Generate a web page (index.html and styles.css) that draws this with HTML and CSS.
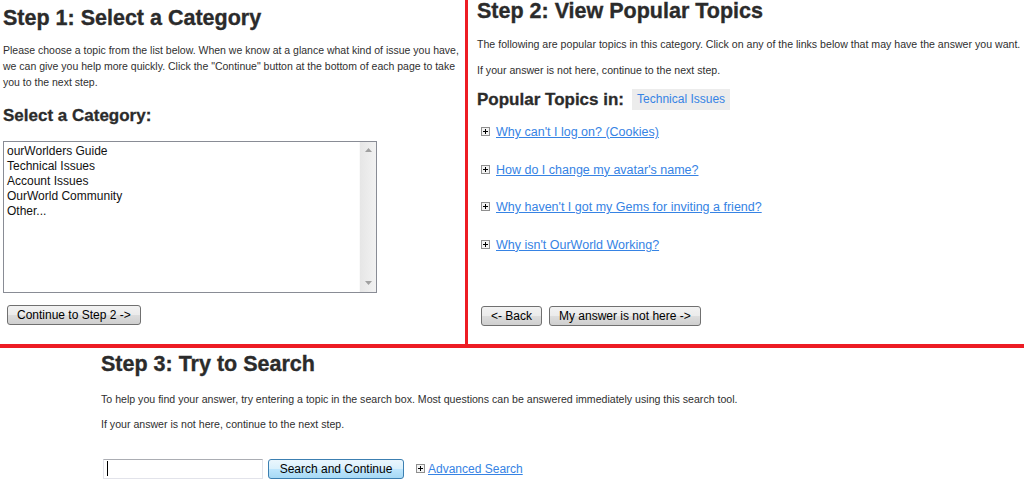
FILE: index.html
```html
<!DOCTYPE html>
<html lang="en">
<head>
    <meta charset="UTF-8">
    <meta name="viewport" content="width=device-width, initial-scale=1.0">
    <title>OurWorld Support - Ask a Question</title>
    <link rel="stylesheet" href="styles.css">
</head>
<body>
    <div class="steps-top">
        <div class="step step-one">
            <h1>Step 1: Select a Category</h1>
            <p class="intro">Please choose a topic from the list below. When we know at a glance what kind of issue you have, we can give you help more quickly. Click the "Continue" button at the bottom of each page to take you to the next step.</p>
            <h2>Select a Category:</h2>
            <div class="listbox">
                <ul class="listbox-items">
                    <li>ourWorlders Guide</li>
                    <li>Technical Issues</li>
                    <li>Account Issues</li>
                    <li>OurWorld Community</li>
                    <li>Other...</li>
                </ul>
                <div class="listbox-scroll">
                    <svg width="7" height="4" viewBox="0 0 7 4"><polygon points="3.5,0 7,4 0,4" fill="#a0a0a0"/></svg>
                    <svg width="7" height="4" viewBox="0 0 7 4"><polygon points="0,0 7,0 3.5,4" fill="#a0a0a0"/></svg>
                </div>
            </div>
            <div class="actions">
                <button class="btn">Continue to Step 2 -&gt;</button>
            </div>
        </div>

        <div class="step step-two">
            <h1>Step 2: View Popular Topics</h1>
            <p class="intro nowrap">The following are popular topics in this category. Click on any of the links below that may have the answer you want.</p>
            <p class="intro next">If your answer is not here, continue to the next step.</p>
            <div class="topics-head">
                <h2>Popular Topics in:</h2>
                <span class="category-tag">Technical Issues</span>
            </div>
            <ul class="topics">
                <li>
                    <svg class="expander" width="9" height="9" viewBox="0 0 9 9"><rect x="0.5" y="0.5" width="8" height="8" fill="#f3f3f3" stroke="#8f8f8f"/><path d="M2 4.5H7M4.5 2V7" stroke="#000"/></svg>
                    <a href="#">Why can't I log on? (Cookies)</a>
                </li>
                <li>
                    <svg class="expander" width="9" height="9" viewBox="0 0 9 9"><rect x="0.5" y="0.5" width="8" height="8" fill="#f3f3f3" stroke="#8f8f8f"/><path d="M2 4.5H7M4.5 2V7" stroke="#000"/></svg>
                    <a href="#">How do I change my avatar's name?</a>
                </li>
                <li>
                    <svg class="expander" width="9" height="9" viewBox="0 0 9 9"><rect x="0.5" y="0.5" width="8" height="8" fill="#f3f3f3" stroke="#8f8f8f"/><path d="M2 4.5H7M4.5 2V7" stroke="#000"/></svg>
                    <a href="#">Why haven't I got my Gems for inviting a friend?</a>
                </li>
                <li>
                    <svg class="expander" width="9" height="9" viewBox="0 0 9 9"><rect x="0.5" y="0.5" width="8" height="8" fill="#f3f3f3" stroke="#8f8f8f"/><path d="M2 4.5H7M4.5 2V7" stroke="#000"/></svg>
                    <a href="#">Why isn't OurWorld Working?</a>
                </li>
            </ul>
            <div class="actions">
                <button class="btn">&lt;- Back</button>
                <button class="btn">My answer is not here -&gt;</button>
            </div>
        </div>
    </div>

    <div class="step step-three">
        <h1>Step 3: Try to Search</h1>
        <p class="intro">To help you find your answer, try entering a topic in the search box. Most questions can be answered immediately using this search tool.</p>
        <p class="intro next">If your answer is not here, continue to the next step.</p>
        <div class="search-row">
            <input type="text" class="search-box">
            <button class="btn btn-search">Search and Continue</button>
            <span class="advanced">
                <svg class="expander" width="9" height="9" viewBox="0 0 9 9"><rect x="0.5" y="0.5" width="8" height="8" fill="#f3f3f3" stroke="#8f8f8f"/><path d="M2 4.5H7M4.5 2V7" stroke="#000"/></svg>
                <a href="#">Advanced Search</a>
            </span>
        </div>
    </div>
</body>
</html>
```

FILE: styles.css
```css
body {
    font-family: "Liberation Sans", Arial, sans-serif;
    background-color: #fff;
    color: #333;
    margin: 0;
    padding: 0;
}
a {
    color: #3683e4;
}
h1 {
    font-size: 21.5px;
    line-height: 24px;
    font-weight: bold;
    color: #2b2b2b;
    -webkit-text-stroke: 0.35px #2b2b2b;
    margin: 6px 0 0;
}
h2 {
    font-size: 17px;
    line-height: 20px;
    font-weight: bold;
    color: #2b2b2b;
    -webkit-text-stroke: 0.3px #2b2b2b;
    margin: 16px 0 0;
}
.intro {
    font-size: 10.6px;
    line-height: 16px;
    color: #2f2f2f;
    margin: 12px 0 0;
}
.intro.next {
    margin-top: 10px;
}
.nowrap {
    white-space: nowrap;
}

/* top row: step 1 and step 2 side by side */
.steps-top {
    display: grid;
    grid-template-columns: 465px 1fr;
    height: 344px;
    border-bottom: 4px solid #ed1c24;
}
.step-one {
    padding-left: 3px;
}
.step-one .intro {
    font-size: 10.5px;
    width: 462px;
}
.step-two {
    border-left: 3px solid #ed1c24;
    padding-left: 9px;
}
.step-two h1 {
    margin-top: 0;
    line-height: 22px;
}
.step-two .intro {
    margin-top: 14px;
}
.step-two .intro.next {
    margin-top: 10px;
}

/* category list box */
.listbox {
    display: flex;
    width: 374px;
    height: 152px;
    box-sizing: border-box;
    margin-top: 15px;
    border: 1px solid #898c95;
    background: #fff;
}
.listbox-items {
    flex: 1;
    list-style: none;
    margin: 0;
    padding: 2px 0 0 3px;
    font-size: 12px;
    line-height: 15px;
    color: #111;
}
.listbox-scroll {
    width: 17px;
    display: flex;
    flex-direction: column;
    justify-content: space-between;
    align-items: center;
    padding: 6px 0 7px;
    box-sizing: border-box;
    background: linear-gradient(to right, #e6e6e6, #f2f2f2);
    border-left: 1px solid #fafafa;
}

/* buttons */
.actions {
    display: flex;
    gap: 7px;
    margin: 12px 0 0 4px;
}
.btn {
    font-family: "Liberation Sans", Arial, sans-serif;
    font-size: 12px;
    color: #000;
    height: 20px;
    padding: 0 9px;
    border: 1px solid #707070;
    border-radius: 3px;
    background: linear-gradient(#f2f2f2 0%, #ebebeb 50%, #dddddd 50%, #cfcfcf 100%);
    cursor: pointer;
}
.step-two .actions {
    margin-top: 52px;
}

/* popular topics */
.topics-head {
    display: flex;
    align-items: center;
    gap: 8px;
    height: 21px;
    margin-top: 11px;
}
.topics-head h2 {
    margin: 0;
}
.category-tag {
    font-size: 12px;
    line-height: 21px;
    padding: 0 5px;
    background-color: #ececec;
    color: #3683e4;
}
.topics {
    list-style: none;
    margin: 14px 0 0;
    padding: 0;
    display: flex;
    flex-direction: column;
    gap: 20.5px;
}
.topics li {
    display: flex;
    align-items: flex-start;
    font-size: 12.5px;
    line-height: 17px;
}
.expander {
    flex-shrink: 0;
    margin: 3px 6px 0 4px;
}

/* step 3 search */
.step-three {
    padding-left: 101px;
}
.step-three h1 {
    margin-top: 3.5px;
}
.step-three .intro {
    margin-top: 15px;
}
.step-three .intro.next {
    margin-top: 9px;
}
.search-row {
    display: flex;
    align-items: center;
    margin-top: 27px;
}
.search-box {
    width: 160px;
    height: 20px;
    box-sizing: border-box;
    margin: 0 0 0 2px;
    padding: 0 4px;
    border: 1px solid #e2e3ea;
    border-top-color: #abadb3;
    background: #fff linear-gradient(#000, #000) no-repeat 3px 1px / 1px 15px;
}
.btn-search {
    width: 136px;
    margin-left: 5px;
    padding: 0;
    border-color: #3c7fb1;
    background: linear-gradient(#eaf6fd 0%, #d9f0fc 50%, #bee6fd 50%, #a7d9f5 100%);
}
.advanced {
    display: flex;
    align-items: center;
    font-size: 12px;
    margin-left: 8px;
}
.advanced .expander {
    margin: 0 3px 0 4px;
}
```
